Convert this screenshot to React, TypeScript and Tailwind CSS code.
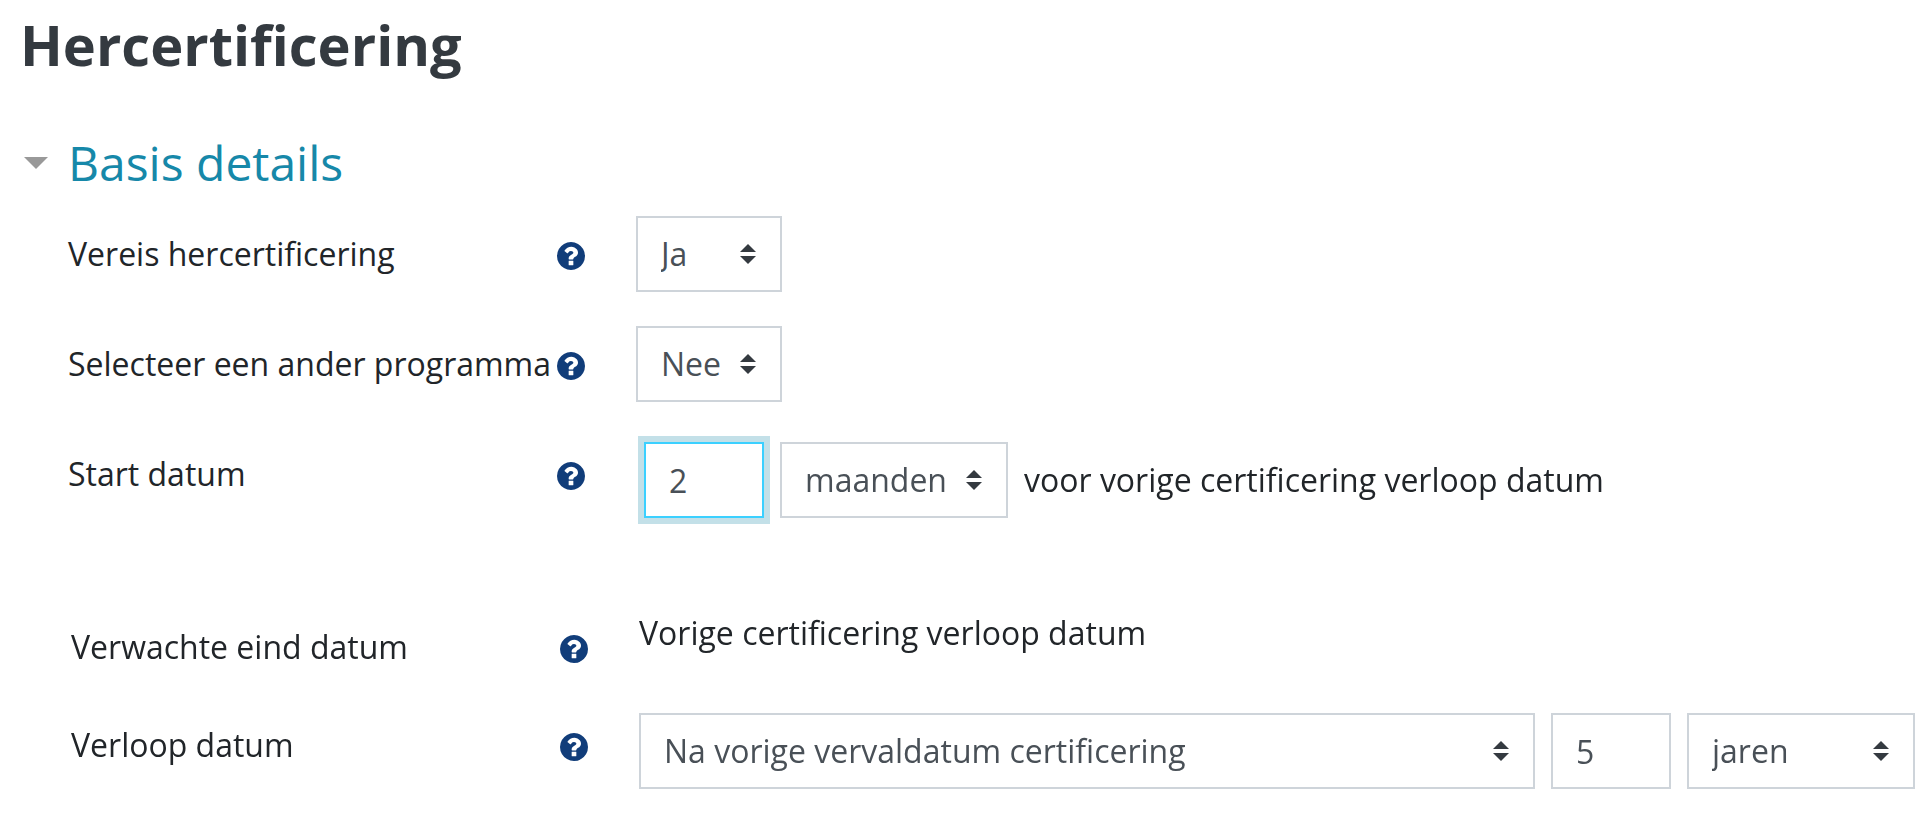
import { useState } from "react";
import type { ReactNode } from "react";

const HELP_PATH =
  "M1024 1376v-192q0-14-9-23t-23-9h-192q-14 0-23 9t-9 23v192q0 14 9 23t23 9h192q14 0 23-9t9-23zm256-672q0-88-55.5-163t-138.500-116-170-41q-243 0-371 213-15 24 8 42l132 100q7 6 19 6 16 0 25-12 53-68 86-92 34-24 86-24 48 0 85.500 26t37.500 59q0 38-20 61t-68 45q-63 28-115.500 86.500t-52.500 125.500v36q0 14 9 23t23 9h192q14 0 23-9t9-23q0-19 21.500-49.500t54.500-49.500q32-18 49-28.500t46-35 44.500-48 28-60.500 12.500-81zm384 192q0 209-103 385.500t-279.500 279.500-385.500 103-385.500-103-279.500-279.500-103-385.500 103-385.500 279.500-279.500 385.500-103 385.500 103 279.500 279.500 103 385.500z";

const FIELD =
  "block h-[76px] w-full rounded-none border-2 border-[#ced4da] bg-white pl-[23px] text-[32px] text-[#495057] outline-none focus:border-[#3bd0ff] focus:ring-6 focus:ring-[#c3e0e8]";

function HelpButton({ label }: { label: string }) {
  return (
    <button type="button" aria-label={`Hulp bij ${label}`} className="mt-1 shrink-0 cursor-pointer">
      <svg viewBox="128 128 1536 1536" className="size-7 fill-[#113d7a]">
        <path d={HELP_PATH} />
      </svg>
    </button>
  );
}

type SelectProps = {
  id?: string;
  label?: string;
  options: string[];
  className: string;
};

function Select({ id, label, options, className }: SelectProps) {
  const [value, setValue] = useState(options[0]);

  return (
    <div className={`relative ${className}`}>
      <select
        id={id}
        aria-label={label}
        value={value}
        onChange={(e) => setValue(e.target.value)}
        className={`${FIELD} appearance-none pr-12`}
      >
        {options.map((option) => (
          <option key={option}>{option}</option>
        ))}
      </select>
      <svg
        viewBox="0 0 16 20"
        className="pointer-events-none absolute right-[26px] top-1/2 h-5 w-4 -translate-y-1/2 fill-[#343a40]"
      >
        <path d="M0 8 8 0l8 8zM0 12h16l-8 8z" />
      </svg>
    </div>
  );
}

type RowProps = {
  label: string;
  htmlFor?: string;
  labelClass?: string;
  children: ReactNode;
};

function Row({ label, htmlFor, labelClass = "pt-[14px]", children }: RowProps) {
  return (
    <div className="flex items-start">
      <div className={`flex w-[517px] shrink-0 items-center justify-between ${labelClass}`}>
        <label htmlFor={htmlFor} className="whitespace-nowrap">
          {label}
        </label>
        <HelpButton label={label} />
      </div>
      <div className="ml-[51px] flex min-w-0 flex-1 items-center gap-4">{children}</div>
    </div>
  );
}

export default function App() {
  const [open, setOpen] = useState(true);
  const [start, setStart] = useState("2");
  const [expiry, setExpiry] = useState("5");

  return (
    <main className="min-h-screen bg-white pl-5 pr-[11px] pt-1 pb-12 font-['Open_Sans','Noto_Sans',sans-serif] text-[32px] leading-[48px] text-[#212529]">
      <h1 className="text-[56px] leading-[80px] font-bold text-[#343a40]">Hercertificering</h1>

      <section className="mt-[45px] pl-1">
        <h2 className="text-[48px] leading-[68px] text-[#1688a9]">
          <button
            type="button"
            aria-expanded={open}
            onClick={() => setOpen(!open)}
            className="flex cursor-pointer items-center gap-5"
          >
            <svg viewBox="0 0 24 12" className={`h-3 w-6 fill-[#999] ${open ? "" : "-rotate-90"}`}>
              <path d="M0 0h24L12 12z" />
            </svg>
            Basis details
          </button>
        </h2>

        {open && (
          <form>
            <div className="mt-[19px] flex flex-col gap-[34px] pl-[44px]">
              <Row label="Vereis hercertificering" htmlFor="require">
                <Select id="require" options={["Ja", "Nee"]} className="w-[146px]" />
              </Row>
              <Row label="Selecteer een ander programma" htmlFor="program">
                <Select id="program" options={["Nee", "Ja"]} className="w-[146px]" />
              </Row>
              <Row label="Start datum" htmlFor="start">
                <div className="ml-2 mt-[6px] w-[120px]">
                  <input
                    id="start"
                    type="text"
                    autoFocus
                    value={start}
                    onChange={(e) => setStart(e.target.value)}
                    className={FIELD}
                  />
                </div>
                <Select
                  label="Start datum eenheid"
                  options={["maanden", "dagen", "weken", "jaren"]}
                  className="mt-[6px] w-[228px]"
                />
                <span className="mt-[6px]">voor vorige certificering verloop datum</span>
              </Row>
            </div>

            <div className="mt-[91px] flex flex-col gap-[42px] pl-[47px]">
              <Row label="Verwachte eind datum">
                <p>Vorige certificering verloop datum</p>
              </Row>
              <Row label="Verloop datum" htmlFor="expiry" labelClass="pt-2">
                <Select
                  id="expiry"
                  options={["Na vorige vervaldatum certificering", "Vaste datum"]}
                  className="min-w-0 flex-1"
                />
                <div className="w-[120px]">
                  <input
                    type="text"
                    aria-label="Verloop datum aantal"
                    value={expiry}
                    onChange={(e) => setExpiry(e.target.value)}
                    className={FIELD}
                  />
                </div>
                <Select
                  label="Verloop datum eenheid"
                  options={["jaren", "maanden", "weken", "dagen"]}
                  className="w-[228px]"
                />
              </Row>
            </div>
          </form>
        )}
      </section>
    </main>
  );
}
